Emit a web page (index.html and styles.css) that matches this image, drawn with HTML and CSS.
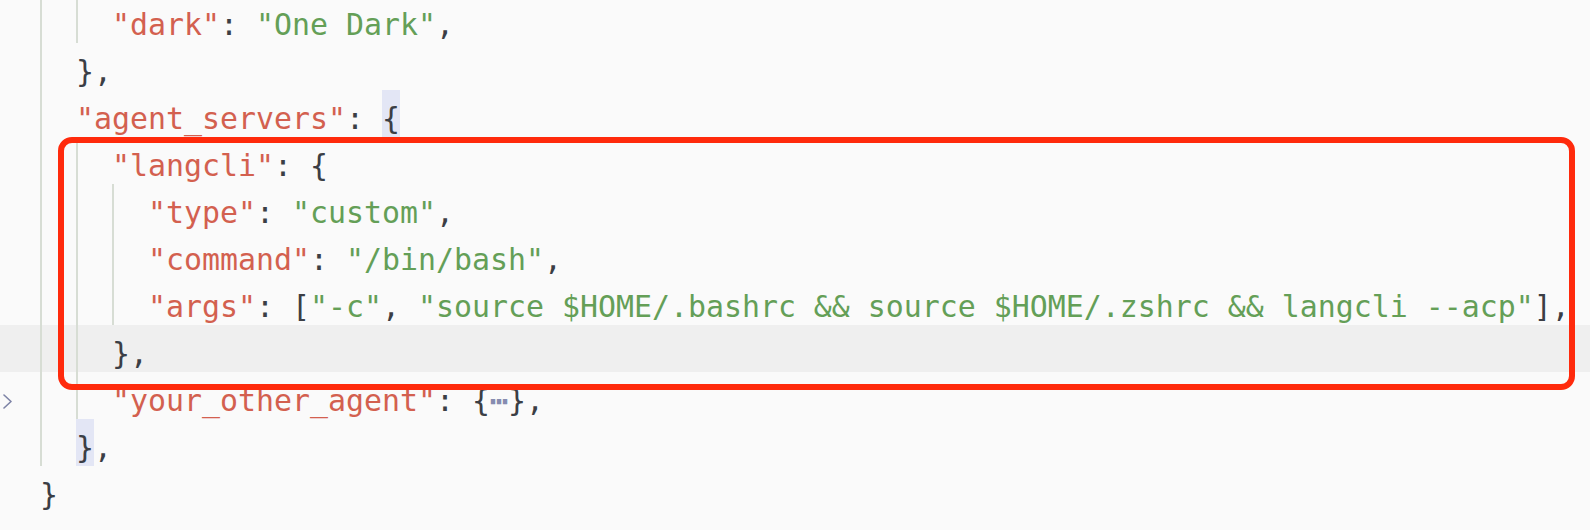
FILE: index.html
```html
<!DOCTYPE html>
<html lang="en">
<head>
<meta charset="utf-8">
<title>settings.json</title>
<link rel="stylesheet" href="styles.css">
</head>
<body>
<div class="editor">
  <div class="row"><span class="gutter"></span><span class="code"><span class="ind"></span><span class="ind"></span><span class="k">"dark"</span><span class="p">: </span><span class="s">"One Dark"</span><span class="p">,</span></span></div>
  <div class="row"><span class="gutter"></span><span class="code"><span class="ind"></span><span class="p">},</span></span></div>
  <div class="row"><span class="gutter"></span><span class="code"><span class="ind"></span><span class="k">"agent_servers"</span><span class="p">: </span><span class="p match">{</span></span></div>
  <div class="row"><span class="gutter"></span><span class="code"><span class="ind"></span><span class="ind"></span><span class="k">"langcli"</span><span class="p">: {</span></span></div>
  <div class="row"><span class="gutter"></span><span class="code"><span class="ind"></span><span class="ind"></span><span class="ind"></span><span class="k">"type"</span><span class="p">: </span><span class="s">"custom"</span><span class="p">,</span></span></div>
  <div class="row"><span class="gutter"></span><span class="code"><span class="ind"></span><span class="ind"></span><span class="ind"></span><span class="k">"command"</span><span class="p">: </span><span class="s">"/bin/bash"</span><span class="p">,</span></span></div>
  <div class="row"><span class="gutter"></span><span class="code"><span class="ind"></span><span class="ind"></span><span class="ind"></span><span class="k">"args"</span><span class="p">: [</span><span class="s">"-c"</span><span class="p">, </span><span class="s">"source $HOME/.bashrc &amp;&amp; source $HOME/.zshrc &amp;&amp; langcli --acp"</span><span class="p">],</span></span></div>
  <div class="row current"><span class="gutter"></span><span class="code"><span class="ind"></span><span class="ind"></span><span class="p">},</span></span></div>
  <div class="row"><span class="gutter"><svg class="chev" width="16" height="16" viewBox="0 0 16 16"><path d="M4 1 L11 7.5 L4 14" fill="none" stroke="#7d83a6" stroke-width="1.6" stroke-linecap="round" stroke-linejoin="round"/></svg></span><span class="code"><span class="ind"></span><span class="ind"></span><span class="k">"your_other_agent"</span><span class="p">: {</span><span class="fold">⋯</span><span class="p">},</span></span></div>
  <div class="row"><span class="gutter"></span><span class="code"><span class="ind"></span><span class="p match">}</span><span class="p">,</span></span></div>
  <div class="row"><span class="gutter"></span><span class="code"><span class="p">}</span></span></div>
</div>
<div class="annotation"></div>
</body>
</html>
```

FILE: styles.css
```css
html, body {
  margin: 0;
  padding: 0;
}

body {
  position: relative;
  width: 1590px;
  height: 530px;
  overflow: hidden;
  background: #fafafa;
  font-family: "DejaVu Sans Mono", "Liberation Mono", monospace;
  font-size: 29.9px;
}

.editor {
  display: flex;
  flex-direction: column;
  margin-top: -4px;
}

.row {
  display: flex;
  height: 47px;
  white-space: pre;
}

.row.current {
  background: #efefef;
}

.gutter {
  flex: 0 0 40px;
  display: flex;
  align-items: flex-start;
}

.chev {
  display: block;
  margin-top: 22px;
}

.code {
  display: flex;
  align-items: stretch;
}

.ind {
  width: 36px;
  flex: 0 0 36px;
  box-sizing: border-box;
  border-left: 2px solid #d7ddd4;
}

.k, .s, .p, .fold {
  padding-top: 10px;
  line-height: 37px;
}

.k {
  color: #d3604f;
}

.s {
  color: #649f57;
}

.p {
  color: #3b3e45;
}

.match {
  background: #e3e6f5;
}

.fold {
  color: #868cb0;
  display: inline-block;
  width: 18px;
  text-align: center;
  font-weight: bold;
}

.annotation {
  position: absolute;
  left: 58px;
  top: 137px;
  width: 1517px;
  height: 253px;
  box-sizing: border-box;
  border: 6px solid #ff2a0c;
  border-radius: 14px;
}
```
